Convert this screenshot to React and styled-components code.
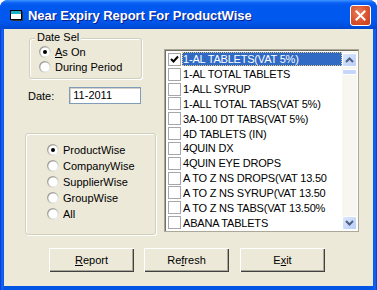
import React from "react"
import styled, { createGlobalStyle } from "styled-components"

const GlobalStyle = createGlobalStyle`
  html, body {
    margin: 0;
    padding: 0;
    background: #ffffff;
    overflow: hidden;
  }
  body {
    font-family: "Liberation Sans", Arial, sans-serif;
    font-size: 11px;
  }
`

const Window = styled.div`
  width: 377px;
  height: 290px;
  display: flex;
  flex-direction: column;
  background: linear-gradient(to right, #0831d9 0, #166aee 2px, #0055e5 4px, #0055e5 373px, #166aee 375px, #0831d9 377px);
  border-radius: 8px 8px 0 0;
  overflow: hidden;
`

const TitleBar = styled.div`
  height: 29px;
  flex: none;
  display: flex;
  align-items: center;
  padding: 0 6px 0 9px;
  background: linear-gradient(to bottom, #3d95ff 0, #0a5ff4 3px, #0058ee 6px, #0058ee 20px, #0051e2 25px, #0046cf 29px);
  color: #fff;
`

const Title = styled.div`
  margin-left: 5px;
  font-weight: bold;
  font-size: 13px;
  letter-spacing: -0.05px;
  text-shadow: 1px 1px #0a1a8a;
  flex: 1;
  padding-top: 1px;
`

const CloseButton = styled.div`
  width: 21px;
  height: 21px;
  box-sizing: border-box;
  border: 1px solid #fff;
  border-radius: 3px;
  background: radial-gradient(circle at 40% 35%, #e8805e 0, #d9522c 55%, #c1401c 100%);
  display: flex;
  align-items: center;
  justify-content: center;
  margin-top: 2px;
`

const Client = styled.div`
  flex: 1;
  margin: 0 4px 4px;
  background: #ece9d8;
  display: flex;
  flex-direction: column;
`

const TopRow = styled.div`
  display: flex;
  align-items: flex-start;
`

const LeftColumn = styled.div`
  width: 131px;
  margin-left: 21px;
  display: flex;
  flex-direction: column;
`

const GroupBox = styled.div`
  box-sizing: border-box;
  border: 1px solid #d0d0bf;
  border-radius: 3px;
  box-shadow: inset 1px 1px #fff, 1px 1px #fff;
  width: ${p => p.$width}px;
  height: ${p => p.$height}px;
  margin-top: ${p => p.$top}px;
  margin-left: ${p => p.$left || 0}px;
  padding: ${p => p.$pad};
`

const Legend = styled.div`
  display: table;
  margin: -8px 0 0 -4px;
  padding: 0 2px;
  background: #ece9d8;
  line-height: 13px;
  color: #000;
`

const RadioRow = styled.div`
  display: flex;
  align-items: center;
  height: ${p => p.$h}px;
  color: #000;
`

const RadioText = styled.span`
  margin-left: ${p => p.$gap}px;
`

const DateRow = styled.div`
  display: flex;
  align-items: center;
  margin-top: 8px;
  margin-left: 3px;
`

const DateInput = styled.div`
  width: 72px;
  height: 17px;
  box-sizing: border-box;
  margin-left: 15px;
  background: #fff;
  border: 1px solid #7f9db9;
  box-shadow: inset 1px 1px #d4d0c8;
  padding: 1px 0 0 3px;
  line-height: 13px;
`

const ListBox = styled.div`
  margin: 20px 0 0 8px;
  width: 195px;
  height: 183px;
  box-sizing: border-box;
  background: #fff;
  border: 1px solid #aca899;
  box-shadow: inset 1px 1px #716f64;
  display: flex;
  padding: 2px 1px 1px 2px;
`

const Items = styled.div`
  flex: 1;
  display: flex;
  flex-direction: column;
`

const Row = styled.div`
  height: 15px;
  display: flex;
  align-items: center;
  padding-left: 1px;
`

const CheckBox = styled.div`
  width: 13px;
  height: 13px;
  box-sizing: border-box;
  border: 1px solid #a7a6aa;
  background: #fff;
  flex: none;
  display: flex;
  align-items: center;
  justify-content: center;
`

const ItemText = styled.div`
  flex: 1;
  height: 14px;
  line-height: 12px;
  box-sizing: border-box;
  margin-left: 1px;
  letter-spacing: -0.2px;
  white-space: nowrap;
  overflow: hidden;
  color: ${p => (p.$selected ? "#fff" : "#000")};
  background: ${p => (p.$selected ? "#316ac5" : "transparent")};
  border: 1px dotted ${p => (p.$selected ? "#e8c880" : "transparent")};
`

const ScrollBar = styled.div`
  width: 15px;
  flex: none;
  background: #f7f6f0;
  display: flex;
  flex-direction: column;
  padding-top: 1px;
`

const ScrollButton = styled.div`
  height: 14px;
  box-sizing: border-box;
  border: 1px solid #fff;
  border-radius: 2px;
  background: linear-gradient(to bottom right, #dce8fd, #b9cdf8);
  display: flex;
  align-items: center;
  justify-content: center;
`

const Thumb = styled.div`
  height: 6px;
  margin-top: 2px;
  box-sizing: border-box;
  border: 1px solid #fff;
  border-radius: 2px;
  background: #c6d6fa;
`

const Track = styled.div`
  flex: 1;
`

const ButtonRow = styled.div`
  display: flex;
  gap: 10px;
  margin: 13px 0 0 45px;
`

const Button = styled.div`
  width: 85px;
  height: 24px;
  box-sizing: border-box;
  display: flex;
  align-items: center;
  justify-content: center;
  color: #000;
  background: #ece9d8;
  box-shadow: inset 1px 1px #fff, inset -1px -1px #404040, inset -2px -2px #aca899;
  margin-right: ${p => p.$extra || 0}px;
`

const Radio = ({ checked }) => (
  <svg width="12" height="12" viewBox="0 0 12 12">
    <defs>
      <linearGradient id="rg" x1="0" y1="0" x2="1" y2="1">
        <stop offset="0" stopColor="#808080" />
        <stop offset="0.5" stopColor="#c8c6ba" />
        <stop offset="1" stopColor="#ffffff" />
      </linearGradient>
    </defs>
    <circle cx="6" cy="6" r="6" fill="url(#rg)" />
    <circle cx="6" cy="6" r="4.6" fill="#fff" />
    {checked && <circle cx="6" cy="6" r="2" fill="#000" />}
  </svg>
)

const AppIcon = () => (
  <svg width="14" height="12" viewBox="0 0 14 12">
    <rect x="1.5" y="1.5" width="11" height="9" fill="#fff" stroke="#000" />
    <rect x="2" y="2" width="10" height="3" fill="#1fb0c8" />
    <rect x="13" y="3" width="1" height="9" fill="#333" />
    <rect x="3" y="11" width="11" height="1" fill="#333" />
  </svg>
)

const items = [
  "1-AL TABLETS(VAT 5%)",
  "1-AL TOTAL TABLETS",
  "1-ALL SYRUP",
  "1-ALL TOTAL TABS(VAT 5%)",
  "3A-100 DT TABS(VAT 5%)",
  "4D TABLETS (IN)",
  "4QUIN DX",
  "4QUIN EYE DROPS",
  "A TO Z NS DROPS(VAT 13.50",
  "A TO Z NS SYRUP(VAT 13.50",
  "A TO Z NS TABS(VAT 13.50%",
  "ABANA TABLETS",
]

const groups = ["ProductWise", "CompanyWise", "SupplierWise", "GroupWise", "All"]

export default function App() {
  return (
    <>
      <GlobalStyle />
      <Window>
        <TitleBar>
          <AppIcon />
          <Title>Near Expiry Report For ProductWise</Title>
          <CloseButton>
            <svg width="11" height="11" viewBox="0 0 11 11">
              <path d="M1.5 1.5 L9.5 9.5 M9.5 1.5 L1.5 9.5" stroke="#fff" strokeWidth="2" strokeLinecap="square" />
            </svg>
          </CloseButton>
        </TitleBar>
        <Client>
          <TopRow>
            <LeftColumn>
              <GroupBox $width={113} $height={41} $top={9} $left={4} $pad="0 0 0 9px">
                <Legend>Date Sel</Legend>
                <RadioRow $h={15}>
                  <Radio checked />
                  <RadioText $gap={4}><u>A</u>s On</RadioText>
                </RadioRow>
                <RadioRow $h={15}>
                  <Radio />
                  <RadioText $gap={4}>During Period</RadioText>
                </RadioRow>
              </GroupBox>
              <DateRow>
                <span>Date:</span>
                <DateInput>11-2011</DateInput>
              </DateRow>
              <GroupBox $width={131} $height={102} $top={29} $pad="8px 0 0 21px">
                {groups.map((g, i) => (
                  <RadioRow key={g} $h={16}>
                    <Radio checked={i === 0} />
                    <RadioText $gap={4}>{g}</RadioText>
                  </RadioRow>
                ))}
              </GroupBox>
            </LeftColumn>
            <ListBox>
              <Items>
                {items.map((t, i) => (
                  <Row key={t}>
                    <CheckBox>
                      {i === 0 && (
                        <svg width="9" height="9" viewBox="0 0 9 9">
                          <path d="M1 4 L3.5 6.5 L8 1.5" stroke="#000" strokeWidth="2" fill="none" />
                        </svg>
                      )}
                    </CheckBox>
                    <ItemText $selected={i === 0}>{t}</ItemText>
                  </Row>
                ))}
              </Items>
              <ScrollBar>
                <ScrollButton>
                  <svg width="9" height="6" viewBox="0 0 9 6">
                    <path d="M1 5 L4.5 1.5 L8 5" stroke="#4d6185" strokeWidth="2" fill="none" />
                  </svg>
                </ScrollButton>
                <Thumb />
                <Track />
                <ScrollButton>
                  <svg width="9" height="6" viewBox="0 0 9 6">
                    <path d="M1 1 L4.5 4.5 L8 1" stroke="#4d6185" strokeWidth="2" fill="none" />
                  </svg>
                </ScrollButton>
              </ScrollBar>
            </ListBox>
          </TopRow>
          <ButtonRow>
            <Button><span><u>R</u>eport</span></Button>
            <Button $extra={1}><span>Re<u>f</u>resh</span></Button>
            <Button><span>E<u>x</u>it</span></Button>
          </ButtonRow>
        </Client>
      </Window>
    </>
  )
}
